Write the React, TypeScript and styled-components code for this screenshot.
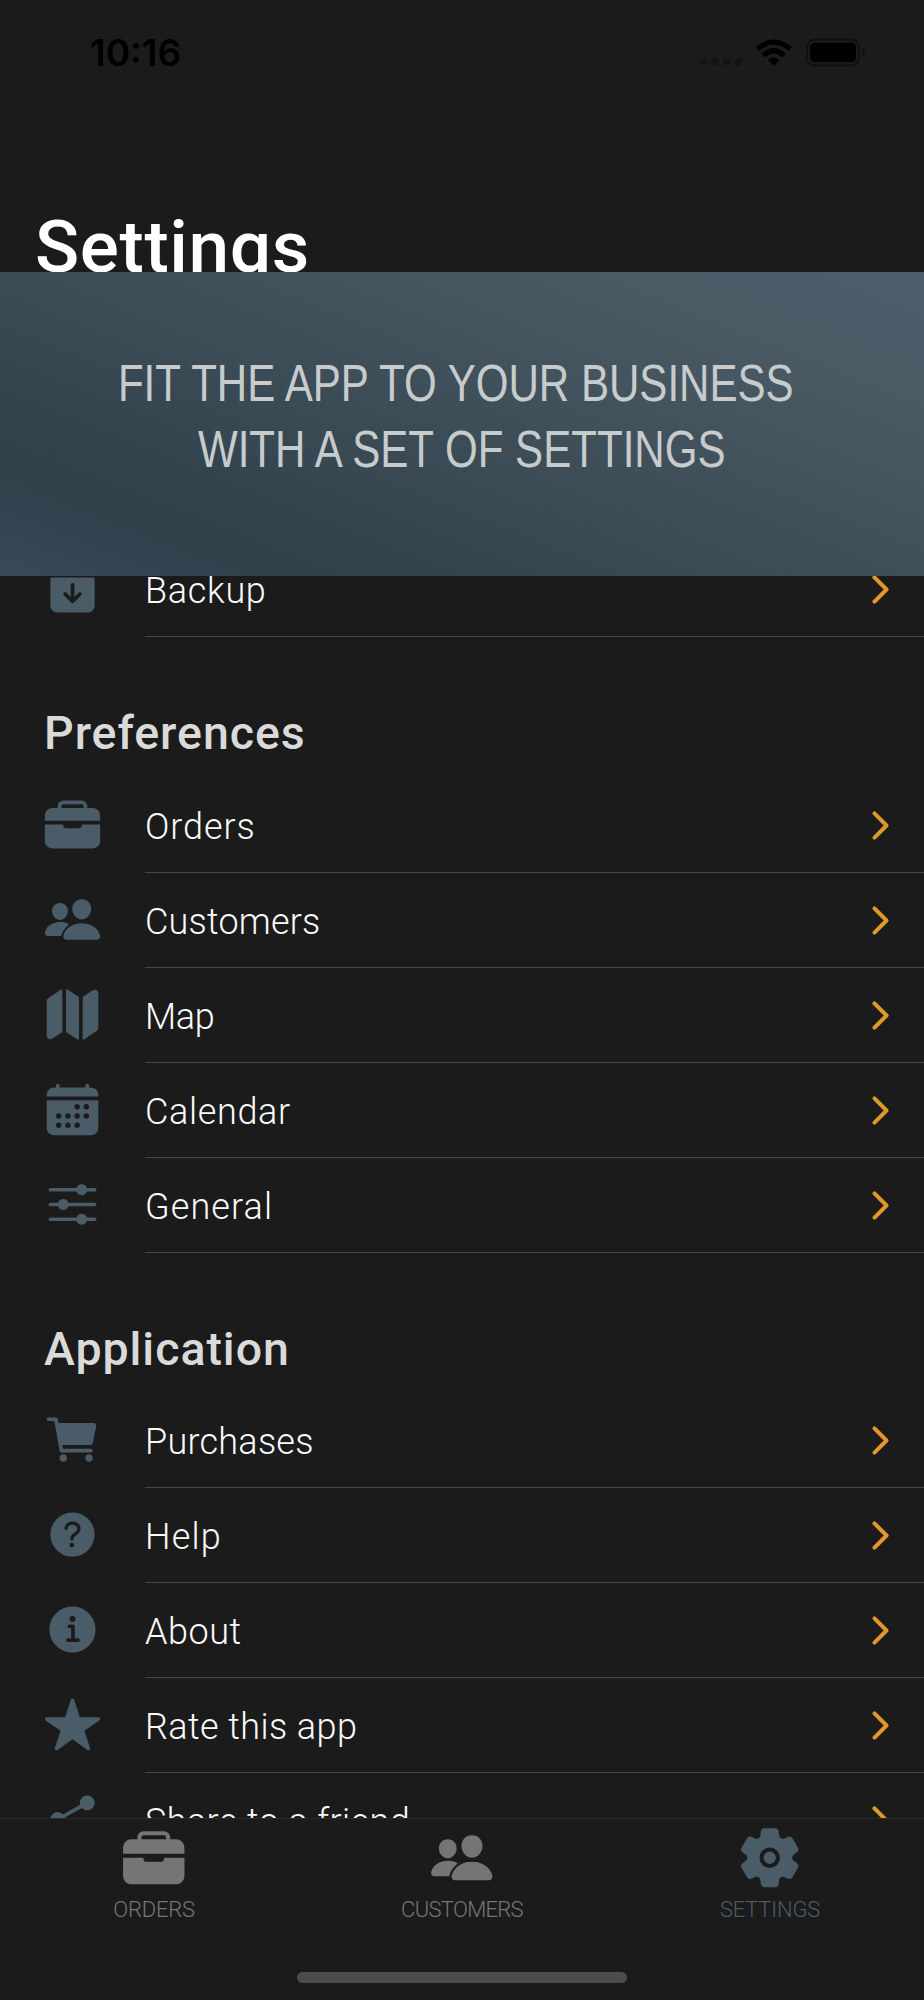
import React from 'react';
import styled, { createGlobalStyle } from 'styled-components';
import type { IconType } from 'react-icons';
import {
  IoArchive,
  IoBriefcase,
  IoPeople,
  IoMap,
  IoCalendar,
  IoOptions,
  IoCart,
  IoHelpCircle,
  IoInformationCircle,
  IoStar,
  IoShareSocial,
  IoSettings,
  IoChevronForward,
} from 'react-icons/io5';

const colors = {
  background: '#1b1b1b',
  slate: '#4a5c68',
  accent: '#e0982b',
  text: '#fafafa',
  heading: '#dadada',
  divider: '#474747',
  muted: '#757575',
};

const GlobalStyle = createGlobalStyle`
  *, *::before, *::after { box-sizing: border-box; }
  body {
    margin: 0;
    background: ${colors.background};
    font-family: Roboto, 'Open Sans', sans-serif;
  }
`;

const Screen = styled.div`
  display: flex;
  flex-direction: column;
  width: 924px;
  height: 2000px;
  overflow: hidden;
  background: ${colors.background};
`;

const Header = styled.header`
  display: flex;
  flex-direction: column;
  height: 272px;
  overflow: hidden;
`;

const StatusBar = styled.div`
  display: flex;
  justify-content: space-between;
  align-items: flex-start;
  padding: 31px 58px 0 90px;
  color: #000;
`;

const Clock = styled.time`
  font: 600 37px/44px Inter, sans-serif;
`;

const StatusIcons = styled.svg`
  display: block;
  width: 168px;
  height: 44px;
`;

const Title = styled.h1`
  flex: none;
  margin: 129px 0 0 35px;
  color: #fff;
  font-size: 73px;
  font-weight: 500;
  line-height: 86px;
  letter-spacing: 0.6px;
`;

const Banner = styled.section`
  display: flex;
  flex: none;
  flex-direction: column;
  align-items: center;
  height: 304px;
  padding-top: 79px;
  background: linear-gradient(22deg, #384a55 0%, #2f404b 17.5%, #4a5b66 82%, #4b5d68 100%);
  color: #c8cbcc;
  font: 51px/66px 'Liberation Sans', Arial, sans-serif;
  white-space: nowrap;
`;

const BannerLine = styled.div<{ $trail?: number }>`
  padding-right: ${({ $trail = 0 }) => $trail}px;
  transform: scaleX(0.825);
`;

const List = styled.main`
  flex: 1;
  min-height: 0;
  overflow: hidden;
`;

const ListContent = styled.div`
  margin-top: -34px;
`;

const SectionTitle = styled.h2<{ $height: number }>`
  height: ${({ $height }) => $height}px;
  margin: 0;
  padding: 69px 0 0 44px;
  color: ${colors.heading};
  font-size: 46.5px;
  font-weight: 500;
  line-height: 54px;
  letter-spacing: 0.95px;
`;

const Row = styled.div`
  display: flex;
  height: 95px;
`;

const RowIcon = styled.div`
  display: flex;
  flex: none;
  align-items: center;
  width: 145px;
  padding: 0 0 2px 43px;
  color: ${colors.slate};
  font-size: 59px;
`;

const RowBody = styled.div`
  display: flex;
  flex: 1;
  align-items: center;
  justify-content: space-between;
  padding-right: 22px;
  border-bottom: 1px solid ${colors.divider};
`;

const RowLabel = styled.span<{ $tracking: number }>`
  padding-top: 3px;
  color: ${colors.text};
  font-size: 36px;
  font-weight: 300;
  letter-spacing: ${({ $tracking }) => $tracking}px;
`;

const Chevron = styled(IoChevronForward)`
  color: ${colors.accent};
  font-size: 43px;
`;

const TabBar = styled.footer`
  display: flex;
  flex: none;
  flex-direction: column;
  height: 182px;
  border-top: 1px solid #2b2b2b;
`;

const Tabs = styled.nav`
  display: flex;
`;

const Tab = styled.div<{ $active?: boolean; $tracking: number }>`
  display: flex;
  flex: 1;
  flex-direction: column;
  align-items: center;
  gap: 6px;
  padding-top: 6px;
  color: ${({ $active }) => ($active ? colors.slate : colors.muted)};
  font-size: 22px;
  font-weight: 300;
  line-height: 26px;
  letter-spacing: ${({ $tracking }) => $tracking}px;
`;

const TabIcon = styled.div`
  display: flex;
  font-size: 65.5px;
`;

const HomeIndicator = styled.div`
  width: 330px;
  height: 11px;
  margin: auto auto 17px;
  border-radius: 6px;
  background: #4c4c4c;
`;

interface Item {
  icon: IconType;
  label: string;
  tracking: number;
}

const preferences: Item[] = [
  { icon: IoBriefcase, label: 'Orders', tracking: 0.9 },
  { icon: IoPeople, label: 'Customers', tracking: 0.2 },
  { icon: IoMap, label: 'Map', tracking: -0.4 },
  { icon: IoCalendar, label: 'Calendar', tracking: 0.65 },
  { icon: IoOptions, label: 'General', tracking: 1.1 },
];

const application: Item[] = [
  { icon: IoCart, label: 'Purchases', tracking: 0.25 },
  { icon: IoHelpCircle, label: 'Help', tracking: 1.2 },
  { icon: IoInformationCircle, label: 'About', tracking: 0.5 },
  { icon: IoStar, label: 'Rate this app', tracking: 0.42 },
  { icon: IoShareSocial, label: 'Share to a friend', tracking: 0.4 },
];

function SettingRow({ icon: Icon, label, tracking }: Item) {
  return (
    <Row>
      <RowIcon>
        <Icon />
      </RowIcon>
      <RowBody>
        <RowLabel $tracking={tracking}>{label}</RowLabel>
        <Chevron />
      </RowBody>
    </Row>
  );
}

function StatusGlyphs() {
  return (
    <StatusIcons viewBox="0 0 168 44">
      {/* cellular signal, no service */}
      <g fill="#141414">
        {[2, 13.6, 25.1, 36.6].map((x) => (
          <rect key={x} x={x} y="27.3" width="7.4" height="7.4" rx="2.4" />
        ))}
      </g>
      {/* wifi */}
      <path d="M75.8 34.8 70 29Q75.8 23.8 81.6 29Z" fill="#000" />
      <g fill="none" stroke="#000" strokeWidth="5">
        <path d="M65.5 24.6Q75.8 14.9 86.1 24.6" />
        <path d="M59.4 18.2Q75.8 4 92.2 18.2" />
      </g>
      {/* battery */}
      <rect x="109" y="8.5" width="52" height="26" rx="8" fill="none" stroke="#101010" strokeWidth="2" />
      <rect x="112" y="11.8" width="46" height="19.3" rx="4.5" fill="#000" />
      <path d="M164 17.3c4 1.6 4 7.4 0 9Z" fill="#101010" />
    </StatusIcons>
  );
}

export default function App() {
  return (
    <>
      <GlobalStyle />
      <Screen>
        <Header>
          <StatusBar>
            <Clock>10:16</Clock>
            <StatusGlyphs />
          </StatusBar>
          <Title>Settings</Title>
        </Header>
        <Banner>
          <BannerLine $trail={14}>FIT THE APP TO YOUR BUSINESS</BannerLine>
          <BannerLine>WITH A SET OF SETTINGS</BannerLine>
        </Banner>
        <List>
          <ListContent>
            <SettingRow icon={IoArchive} label="Backup" tracking={0.7} />
            <SectionTitle $height={141}>Preferences</SectionTitle>
            {preferences.map((item) => (
              <SettingRow key={item.label} {...item} />
            ))}
            <SectionTitle $height={140}>Application</SectionTitle>
            {application.map((item) => (
              <SettingRow key={item.label} {...item} />
            ))}
          </ListContent>
        </List>
        <TabBar>
          <Tabs>
            <Tab $tracking={-0.2}>
              <TabIcon>
                <IoBriefcase />
              </TabIcon>
              ORDERS
            </Tab>
            <Tab $tracking={-0.7}>
              <TabIcon>
                <IoPeople />
              </TabIcon>
              CUSTOMERS
            </Tab>
            <Tab $active $tracking={-0.2}>
              <TabIcon>
                <IoSettings />
              </TabIcon>
              SETTINGS
            </Tab>
          </Tabs>
          <HomeIndicator />
        </TabBar>
      </Screen>
    </>
  );
}
